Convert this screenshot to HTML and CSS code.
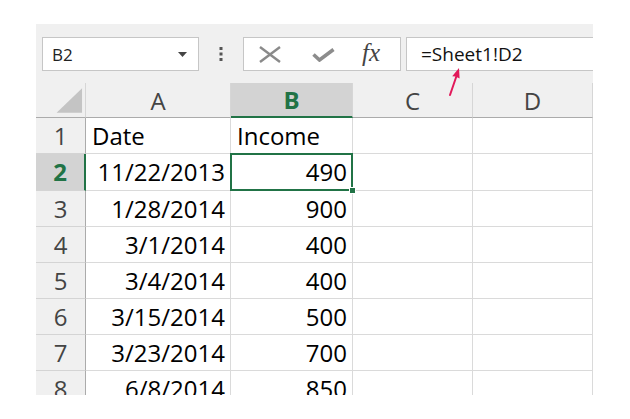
FILE: index.html
```html
<!DOCTYPE html>
<html>
<head>
<meta charset="utf-8">
<link rel="stylesheet" href="styles.css">
</head>
<body>
<div class="sheet">
  <div class="toolbar">
    <div class="namebox">
      <span>B2</span>
      <svg class="dd" width="9" height="5" viewBox="0 0 9 5"><polygon points="0,0 9,0 4.5,5" fill="#444"/></svg>
    </div>
    <div class="dots">
      <svg width="4" height="14" viewBox="0 0 4 14"><rect x="0.5" y="0" width="3" height="3" fill="#555"/><rect x="0.5" y="5.5" width="3" height="3" fill="#555"/><rect x="0.5" y="11" width="3" height="3" fill="#555"/></svg>
    </div>
    <div class="fbuttons">
      <svg class="ico-x" width="22" height="17" viewBox="0 0 22 17"><path d="M1 1 L21 16 M21 1 L1 16" stroke="#8a8a8a" stroke-width="2.4" fill="none"/></svg>
      <svg class="ico-ok" width="23" height="14" viewBox="0 0 23 14"><path d="M1.5 6.5 L7.5 12 L21.5 1.5" stroke="#8c8c8c" stroke-width="3.6" fill="none" stroke-linejoin="miter"/></svg>
      <span class="fx">fx</span>
    </div>
    <div class="finput">=Sheet1!D2</div>
  </div>
  <div class="grid">
    <div class="corner"><svg width="50" height="35" viewBox="0 0 50 35"><polygon points="21,30 47,30 47,5" fill="#c4c4c4"/></svg></div>
    <div class="ch">A</div>
    <div class="ch sel">B</div>
    <div class="ch">C</div>
    <div class="ch">D</div>

    <div class="rh">1</div>
    <div class="c">Date</div>
    <div class="c">Income</div>
    <div class="c"></div>
    <div class="c"></div>

    <div class="rh sel">2</div>
    <div class="c r">11/22/2013</div>
    <div class="c r active">490</div>
    <div class="c"></div>
    <div class="c"></div>

    <div class="rh">3</div>
    <div class="c r">1/28/2014</div>
    <div class="c r">900</div>
    <div class="c"></div>
    <div class="c"></div>

    <div class="rh">4</div>
    <div class="c r">3/1/2014</div>
    <div class="c r">400</div>
    <div class="c"></div>
    <div class="c"></div>

    <div class="rh">5</div>
    <div class="c r">3/4/2014</div>
    <div class="c r">400</div>
    <div class="c"></div>
    <div class="c"></div>

    <div class="rh">6</div>
    <div class="c r">3/15/2014</div>
    <div class="c r">500</div>
    <div class="c"></div>
    <div class="c"></div>

    <div class="rh">7</div>
    <div class="c r">3/23/2014</div>
    <div class="c r">700</div>
    <div class="c"></div>
    <div class="c"></div>

    <div class="rh">8</div>
    <div class="c r">6/8/2014</div>
    <div class="c r">850</div>
    <div class="c"></div>
    <div class="c"></div>
  </div>
  <svg class="arrow" width="557" height="371" viewBox="0 0 557 371">
    <path d="M414 71 L420.5 52" stroke="#e2195a" stroke-width="2" fill="none" stroke-linecap="round"/>
    <polygon points="423,44 423.6,54.6 419.6,52.6 416.2,52.2" fill="#e2195a"/>
  </svg>
</div>
</body>
</html>
```

FILE: styles.css
```css
html, body {
  margin: 0;
  padding: 0;
  background: #ffffff;
}

body {
  font-family: "Open Sans", "Liberation Sans", sans-serif;
}

.sheet {
  position: relative;
  margin: 24px 0 0 36px;
  width: 557px;
  height: 371px;
  background: #f0f0f0;
  overflow: hidden;
}

.toolbar {
  display: flex;
  align-items: flex-start;
  height: 59px;
  padding: 13px 0 0 6px;
  box-sizing: border-box;
}

.namebox {
  width: 157px;
  height: 34px;
  box-sizing: border-box;
  border: 1px solid #c6c6c6;
  background: #fff;
  display: flex;
  align-items: center;
  justify-content: space-between;
  padding: 0 11px 0 9px;
  font-size: 17px;
  color: #222;
}

.dd {
  display: block;
}

.dots {
  width: 44px;
  height: 34px;
  display: flex;
  align-items: center;
  justify-content: center;
}

.dots svg {
  display: block;
}

.fbuttons {
  width: 158px;
  height: 34px;
  box-sizing: border-box;
  border: 1px solid #c6c6c6;
  background: #fff;
  display: flex;
  align-items: center;
  padding-left: 15px;
}

.ico-x {
  display: block;
}

.ico-ok {
  display: block;
  margin-left: 31px;
  margin-top: 2px;
}

.fx {
  margin-left: 27px;
  font-family: "Liberation Serif", "DejaVu Serif", serif;
  font-style: italic;
  font-size: 25px;
  color: #444;
  line-height: 1;
  margin-top: -4px;
}

.finput {
  flex: 1;
  height: 34px;
  box-sizing: border-box;
  border: 1px solid #c6c6c6;
  border-right: none;
  margin-left: 5px;
  background: #fff;
  display: flex;
  align-items: center;
  padding-left: 14px;
  font-size: 19px;
  color: #111;
}

.grid {
  display: grid;
  grid-template-columns: 50px 145px 122px 120px 120px;
  grid-template-rows: 35px 36px 37px repeat(6, 36px);
  height: 312px;
  overflow: hidden;
}

.grid > div {
  box-sizing: border-box;
  font-size: 24px;
  line-height: 1;
  display: flex;
  align-items: center;
}

.corner {
  background: #f0f0f0;
  border-right: 1px solid #d6d6d6;
  border-bottom: 1px solid #ababab;
}

.corner svg {
  display: block;
}

.ch {
  background: #f0f0f0;
  border-right: 1px solid #d6d6d6;
  border-bottom: 1px solid #ababab;
  justify-content: center;
  color: #444;
  padding-top: 1px;
}

.ch.sel {
  background: #d3d3d3;
  color: #217346;
  font-weight: 700;
  border-bottom: 2px solid #217346;
}

.rh {
  background: #f0f0f0;
  border-right: 1px solid #ababab;
  border-bottom: 1px solid #d4d4d4;
  justify-content: center;
  color: #444;
}

.rh.sel {
  background: #d3d3d3;
  color: #217346;
  font-weight: 700;
  border-right: 2px solid #217346;
}

.c {
  background: #fff;
  border-right: 1px solid #dadada;
  border-bottom: 1px solid #dadada;
  padding: 0 5px 0 6px;
  color: #000;
}

.c.r {
  justify-content: flex-end;
}

.c.active {
  position: relative;
}

.c.active::after {
  content: "";
  position: absolute;
  left: -1px;
  top: -1px;
  right: -1px;
  bottom: -1px;
  border: 2px solid #217346;
}

.c.active::before {
  content: "";
  position: absolute;
  right: -4px;
  bottom: -4px;
  width: 5px;
  height: 5px;
  background: #217346;
  border: 1px solid #fff;
  z-index: 2;
}

.arrow {
  position: absolute;
  left: 0;
  top: 0;
  pointer-events: none;
}
```
